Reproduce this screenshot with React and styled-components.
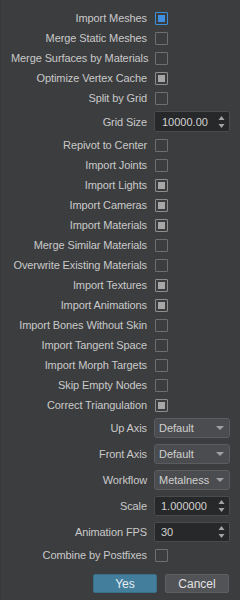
import React from "react";
import styled, { createGlobalStyle, css } from "styled-components";

const Global = createGlobalStyle`
  html, body { margin: 0; padding: 0; background: #3c3d3f; }
  body { font-family: "Liberation Sans", Arial, sans-serif; font-size: 11px; color: #c9c9c9; }
  * { box-sizing: border-box; }
`;

const Panel = styled.div`
  width: 240px;
  height: 600px;
  display: flex;
  flex-direction: column;
  gap: 6px;
  padding: 11px 10px 0 10px;
  border-left: 1px solid #37383a;
`;

const Row = styled.div`
  display: grid;
  grid-template-columns: minmax(0, 1fr) 76px;
  column-gap: 7px;
  align-items: center;
  height: ${(p) => p.$h || 14}px;
`;

const Label = styled.div`
  text-align: right;
  white-space: nowrap;
  line-height: 14px;
  letter-spacing: -0.1px;
`;

const Box = styled.div`
  width: 13px;
  height: 13px;
  margin-left: 1px;
  border: 1px solid ${(p) => (p.$state === "active" ? "#3d8fd8" : p.$state === "on" ? "#8d8d8d" : "#6e6f71")};
  border-radius: 1px;
  padding: 2px;
  display: flex;
`;

const Fill = styled.div`
  flex: 1;
  background: ${(p) => (p.$state === "active" ? "#3f90e0" : "#a7a7a7")};
`;

const SpinWrap = styled.div`
  position: relative;
  height: 100%;
  background: #272829;
  border: 1px solid #4a4b4d;
  border-radius: 2px;
  display: flex;
  align-items: center;
  padding-left: ${(p) => p.$pad || 6}px;
  color: #d2d2d2;
`;

const Arrows = styled.svg`
  position: absolute;
  right: 4px;
  top: 50%;
  transform: translateY(-50%);
`;

const Combo = styled.div`
  position: relative;
  height: 100%;
  background: #4b4c4f;
  border: 1px solid #5c5d60;
  border-radius: 3px;
  display: flex;
  align-items: center;
  padding-left: 4px;
  color: #d0d0d0;
`;

const ComboArrow = styled.svg`
  position: absolute;
  right: 5px;
  top: 50%;
  transform: translateY(-50%);
`;

const Buttons = styled.div`
  display: flex;
  justify-content: flex-end;
  gap: 8px;
  margin-top: 6px;
  padding-right: 1px;
`;

const Button = styled.div`
  width: 64px;
  height: 19px;
  border-radius: 2px;
  display: flex;
  align-items: center;
  justify-content: center;
  font-size: 12px;
  ${(p) =>
    p.$primary
      ? css`
          background: #437e9c;
          border: 1px solid #3a6f8a;
          color: #e8eef2;
        `
      : css`
          background: #525356;
          border: 1px solid #5e5f62;
          color: #e2e2e2;
        `}
`;

const CheckRow = ({ label, state }) => (
  <Row>
    <Label>{label}</Label>
    <Box $state={state}>{state !== "off" && <Fill $state={state} />}</Box>
  </Row>
);

const Spin = ({ label, value, h, pad }) => (
  <Row $h={h || 20}>
    <Label>{label}</Label>
    <SpinWrap $pad={pad}>
      {value}
      <Arrows width="7" height="14" viewBox="0 0 7 14">
        <path d="M3.5 1 L6.5 5 L0.5 5 Z" fill="#a3a3a3" />
        <path d="M0.5 9 L6.5 9 L3.5 13 Z" fill="#a3a3a3" />
      </Arrows>
    </SpinWrap>
  </Row>
);

const Select = ({ label, value }) => (
  <Row $h={20}>
    <Label>{label}</Label>
    <Combo>
      {value}
      <ComboArrow width="8" height="5" viewBox="0 0 8 5">
        <path d="M0 0.5 L8 0.5 L4 4.5 Z" fill="#a0a0a0" />
      </ComboArrow>
    </Combo>
  </Row>
);

export default function App() {
  return (
    <>
      <Global />
      <Panel>
        <CheckRow label="Import Meshes" state="active" />
        <CheckRow label="Merge Static Meshes" state="off" />
        <CheckRow label="Merge Surfaces by Materials" state="off" />
        <CheckRow label="Optimize Vertex Cache" state="on" />
        <CheckRow label="Split by Grid" state="off" />
        <Spin label="Grid Size" value="10000.00" h={21} pad={7} />
        <CheckRow label="Repivot to Center" state="off" />
        <CheckRow label="Import Joints" state="off" />
        <CheckRow label="Import Lights" state="on" />
        <CheckRow label="Import Cameras" state="on" />
        <CheckRow label="Import Materials" state="on" />
        <CheckRow label="Merge Similar Materials" state="off" />
        <CheckRow label="Overwrite Existing Materials" state="off" />
        <CheckRow label="Import Textures" state="on" />
        <CheckRow label="Import Animations" state="on" />
        <CheckRow label="Import Bones Without Skin" state="off" />
        <CheckRow label="Import Tangent Space" state="off" />
        <CheckRow label="Import Morph Targets" state="off" />
        <CheckRow label="Skip Empty Nodes" state="off" />
        <CheckRow label="Correct Triangulation" state="on" />
        <Select label="Up Axis" value="Default" />
        <Select label="Front Axis" value="Default" />
        <Select label="Workflow" value="Metalness" />
        <Spin label="Scale" value="1.000000" />
        <Spin label="Animation FPS" value="30" />
        <CheckRow label="Combine by Postfixes" state="off" />
        <Buttons>
          <Button $primary>Yes</Button>
          <Button>Cancel</Button>
        </Buttons>
      </Panel>
    </>
  );
}
